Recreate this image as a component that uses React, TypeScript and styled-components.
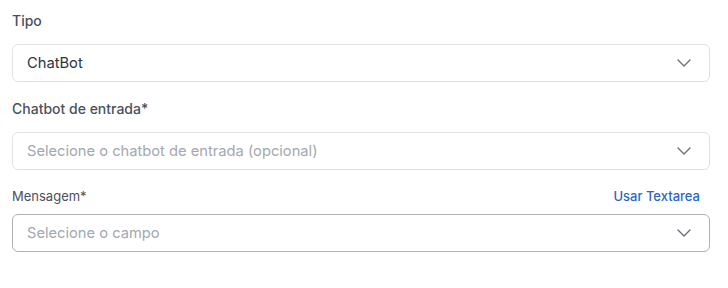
import React from "react";
import styled, { createGlobalStyle } from "styled-components";

const Global = createGlobalStyle`
  html, body { margin: 0; padding: 0; background: #ffffff; }
  body { font-family: Inter, "Noto Sans", "Liberation Sans", sans-serif; }
`;

const Form = styled.div`
  display: flex;
  flex-direction: column;
  padding: 10px 18px 0 12px;
`;

const Field = styled.div`
  display: flex;
  flex-direction: column;
  margin-bottom: 16px;
`;

const LabelRow = styled.div<{ $tight?: boolean }>`
  display: flex;
  align-items: center;
  justify-content: space-between;
  height: 20px;
  margin-bottom: ${(p) => (p.$tight ? "8px" : "14px")};
`;

const Label = styled.label<{ $small?: boolean }>`
  font-size: ${(p) => (p.$small ? "13px" : "14px")};
  font-weight: ${(p) => (p.$small ? 400 : 500)};
  color: #4b505c;
`;

const LinkButton = styled.button`
  border: 0;
  background: none;
  padding: 0 10px 0 0;
  font-family: inherit;
  font-size: 13px;
  font-weight: 500;
  color: #2c67c2;
  cursor: pointer;
`;

const Select = styled.div<{ $active?: boolean }>`
  display: flex;
  align-items: center;
  justify-content: space-between;
  box-sizing: border-box;
  height: 38px;
  padding: 0 18px 0 14px;
  border: 1px solid ${(p) => (p.$active ? "#aeb0b6" : "#e1e2e5")};
  border-radius: 6px;
  background: #fff;
`;

const Value = styled.span<{ $placeholder?: boolean }>`
  font-size: 14.7px;
  color: ${(p) => (p.$placeholder ? "#a3a7b0" : "#2c3444")};
`;

const Chevron = () => (
  <svg width="14" height="8" viewBox="0 0 14 8" fill="none">
    <path d="M1 1l6 6 6-6" stroke="#6b6f7b" strokeWidth="1.4" strokeLinecap="round" strokeLinejoin="round" />
  </svg>
);

export default function App() {
  return (
    <>
      <Global />
      <Form>
        <Field>
          <LabelRow>
            <Label>Tipo</Label>
          </LabelRow>
          <Select>
            <Value>ChatBot</Value>
            <Chevron />
          </Select>
        </Field>
        <Field>
          <LabelRow>
            <Label>Chatbot de entrada*</Label>
          </LabelRow>
          <Select>
            <Value $placeholder>Selecione o chatbot de entrada (opcional)</Value>
            <Chevron />
          </Select>
        </Field>
        <Field>
          <LabelRow $tight>
            <Label $small>Mensagem*</Label>
            <LinkButton>Usar Textarea</LinkButton>
          </LabelRow>
          <Select $active>
            <Value $placeholder>Selecione o campo</Value>
            <Chevron />
          </Select>
        </Field>
      </Form>
    </>
  );
}
